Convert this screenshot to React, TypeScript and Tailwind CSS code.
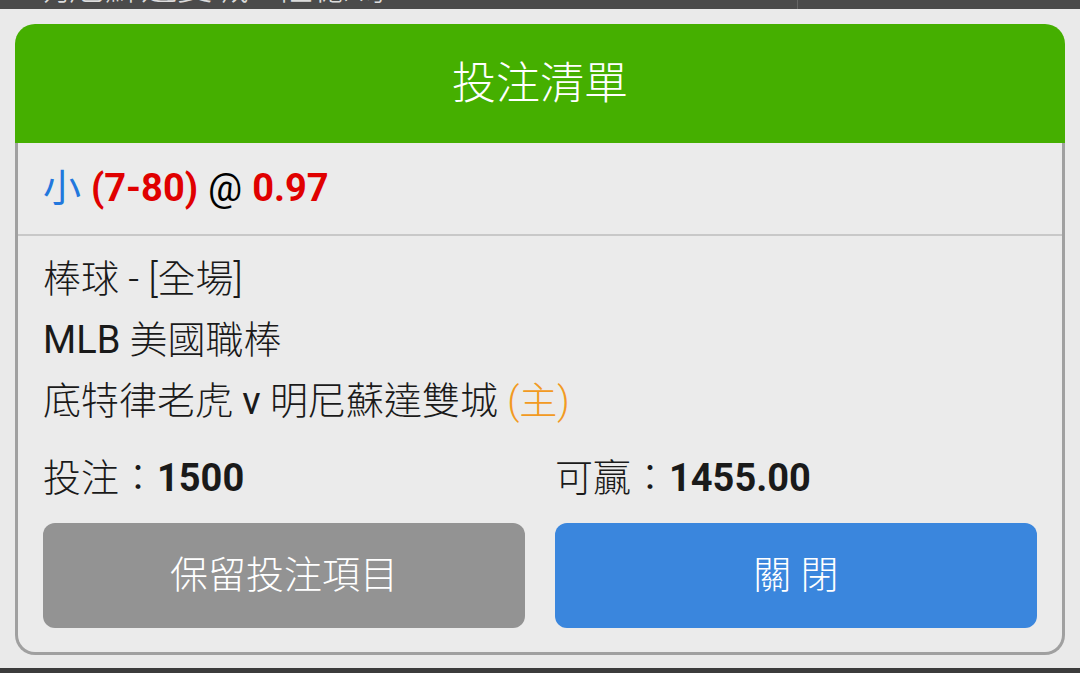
import React from 'react';

const font = { fontFamily: 'Roboto, "Noto Sans CJK TC", sans-serif' };

export default function App() {
  return (
    <div className="w-[1080px] h-[673px] flex flex-col bg-[#eaeaea] overflow-hidden" style={font}>
      {/* 背後のページ（上部が見えている） */}
      <div className="h-[9px] shrink-0 bg-[#4b4b4b] flex overflow-hidden">
        <div className="w-[798px] pl-[33px] border-r border-[#666]">
          <p className="text-[36px] leading-[36px] -mt-[30px] font-light text-[#dcdcdc] whitespace-nowrap">明尼蘇達雙城 - 佐德瑪</p>
        </div>
      </div>

      <div className="flex-1 px-[15px] pt-[15px]">
        {/* モーダル */}
        <div className="flex flex-col">
          <header className="h-[119px] bg-[#45af00] rounded-t-[20px] flex items-center justify-center">
            <h1 className="text-[44px] text-white font-light">投注清單</h1>
          </header>

          <div className="border-x-[3px] border-b-[3px] border-[#a0a0a0] rounded-b-[20px] bg-[#ebebeb]">
            <div className="h-[93px] flex items-center px-[25px] text-[38px] border-b-2 border-[#c8c8c8]">
              <span className="text-[#2277dd]">小</span>
              <span className="ml-[10px] font-bold text-[#e00000]">(7-80)</span>
              <span className="ml-[10px] text-black">@</span>
              <span className="ml-[10px] font-bold text-[#e00000]">0.97</span>
            </div>

            <div className="px-[25px] pt-[13px] pb-[24px] text-[38px] text-[#1a1a1a] font-light">
              <p className="leading-[61px]">棒球 - [全場]</p>
              <p className="leading-[61px]">
                <span className="font-normal">MLB</span> 美國職棒
              </p>
              <p className="leading-[61px]">
                底特律老虎 <span className="font-normal">v</span> 明尼蘇達雙城 <span className="text-[#f29a22]">(主)</span>
              </p>

              <div className="mt-[16px] grid grid-cols-2 gap-[30px] leading-[61px]">
                <p>
                  投注：<span className="font-bold">1500</span>
                </p>
                <p>
                  可贏：<span className="font-bold">1455.00</span>
                </p>
              </div>

              <div className="mt-[14px] grid grid-cols-2 gap-[30px]">
                <button className="h-[105px] rounded-[12px] bg-[#939393] text-white text-[38px] font-light">保留投注項目</button>
                <button className="h-[105px] rounded-[12px] bg-[#3a86dd] text-white text-[38px] font-light">關 閉</button>
              </div>
            </div>
          </div>
        </div>
      </div>

      <div className="h-[5px] shrink-0 bg-[#3c3c3c]" />
    </div>
  );
}
